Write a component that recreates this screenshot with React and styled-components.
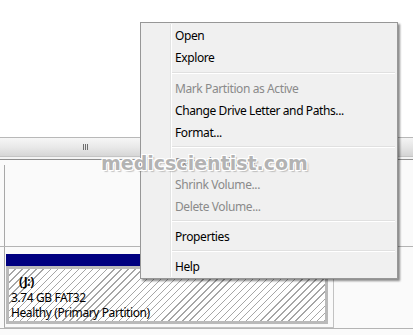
import React from 'react'
import styled, { createGlobalStyle } from 'styled-components'

const GlobalStyle = createGlobalStyle`
  html, body {
    margin: 0;
    padding: 0;
    background: #fff;
    overflow: hidden;
  }
  body {
    font-family: "Noto Sans", "Open Sans", sans-serif;
  }
`

const Screen = styled.div`
  position: relative;
  width: 413px;
  height: 335px;
  overflow: hidden;
  background: #fff;
  font-size: 12px;
  letter-spacing: -0.4px;
`

const TopPane = styled.div`
  height: 137px;
  background: #fff;
`

const ScrollBar = styled.div`
  height: 20px;
  box-sizing: border-box;
  border-top: 1px solid #b8b8b8;
  border-bottom: 1px solid #c4c4c4;
  background: linear-gradient(#f4f4f4, #e6e6e6 50%, #d4d4d4);
  display: flex;
`

const Thumb = styled.div`
  width: 170px;
  display: flex;
  align-items: center;
  justify-content: center;
  border-right: 1px solid #b0b0b0;
  background: linear-gradient(#f6f6f6, #e9e9e9 50%, #d6d6d6);
`

const Grip = styled.div`
  display: flex;
  gap: 1px;
  span {
    width: 1px;
    height: 6px;
    background: #6f6f6f;
  }
`

const Split = styled.div`
  height: 2px;
  background: #f4f4f4;
  border-bottom: 1px solid #8e8e8e;
`

const Lower = styled.div`
  background: #fafafa;
  height: 175px;
  padding-top: 5px;
  box-sizing: border-box;
`

const DiskRow = styled.div`
  height: 81px;
  margin-left: 4px;
  border-left: 1px solid #a8a8a8;
`

const RowLine = styled.div`
  height: 1px;
  background: #b4b4b4;
`

const PartFrame = styled.div`
  margin-left: 4px;
  width: 330px;
  height: 81px;
  box-sizing: border-box;
  border-left: 1px solid #a8a8a8;
  border-right: 1px solid #c2c2c2;
  border-bottom: 1px solid #c2c2c2;
  padding: 7px 0 0 1px;
`

const BlueBar = styled.div`
  width: 322px;
  height: 12px;
  background: #000080;
`

const Hatch = styled.div`
  width: 322px;
  height: 58px;
  box-sizing: border-box;
  border: 3px solid #bababa;
  padding: 5px 0 0 2px;
  background: repeating-linear-gradient(
    135deg,
    #fff 0px,
    #fff 4px,
    #a6a6a6 4px,
    #a6a6a6 5px
  );
  color: #000;
  line-height: 15.5px;
`

const PartLine = styled.div`
  white-space: nowrap;
  font-weight: ${p => (p.$bold ? 700 : 400)};
  padding-left: ${p => (p.$indent ? 8 : 0)}px;
`

const Menu = styled.div`
  position: absolute;
  left: 140px;
  top: 22px;
  width: 258px;
  box-sizing: border-box;
  border: 1px solid #979797;
  background: #f0f0f0;
  box-shadow: 2px 2px 2px rgba(0, 0, 0, 0.45);
  padding: 1px 0 1px;
  &::before {
    content: '';
    position: absolute;
    top: 1px;
    bottom: 1px;
    left: 29px;
    width: 2px;
    background: linear-gradient(90deg, #e2e3e3 50%, #fff 50%);
  }
`

const Item = styled.div`
  height: 22px;
  line-height: 23px;
  padding-left: 34px;
  color: ${p => (p.$disabled ? '#8a8a8a' : '#000')};
  white-space: nowrap;
`

const Sep = styled.div`
  height: ${p => p.$h || 8}px;
  display: flex;
  align-items: center;
  padding-left: 31px;
  padding-right: 2px;
  &::after {
    content: '';
    flex: 1;
    height: 2px;
    background: linear-gradient(#e0e0e0 50%, #fff 50%);
  }
`

const Watermark = styled.div`
  position: absolute;
  left: 101px;
  top: 152px;
  font-family: "DejaVu Sans", sans-serif;
  font-weight: 700;
  font-size: 19px;
  letter-spacing: 0;
  color: rgba(165, 165, 165, 0.85);
  text-shadow: -1px -1px 0 #fff, 1px -1px 0 #fff, -1px 1px 0 #fff, 1px 1px 0 #fff,
    2px 2px 1px rgba(120, 120, 120, 0.4);
  pointer-events: none;
  white-space: nowrap;
`

const menu = [
  { label: 'Open' },
  { label: 'Explore' },
  { sep: 9 },
  { label: 'Mark Partition as Active', disabled: true },
  { label: 'Change Drive Letter and Paths...' },
  { label: 'Format...' },
  { sep: 8 },
  { label: 'Extend Volume...', disabled: true },
  { label: 'Shrink Volume...', disabled: true },
  { label: 'Delete Volume...', disabled: true },
  { sep: 8 },
  { label: 'Properties' },
  { sep: 8 },
  { label: 'Help' },
]

export default function App() {
  return (
    <Screen>
      <GlobalStyle />
      <TopPane />
      <ScrollBar>
        <Thumb>
          <Grip><span /><span /><span /></Grip>
        </Thumb>
      </ScrollBar>
      <Split />
      <Lower>
        <DiskRow />
        <RowLine />
        <PartFrame>
          <BlueBar />
          <Hatch>
            <PartLine $bold $indent>(J:)</PartLine>
            <PartLine>3.74 GB FAT32</PartLine>
            <PartLine>Healthy (Primary Partition)</PartLine>
          </Hatch>
        </PartFrame>
        <RowLine />
      </Lower>

      <Menu>
        {menu.map((m, i) =>
          m.sep ? (
            <Sep key={i} $h={m.sep} />
          ) : (
            <Item key={i} $disabled={m.disabled}>{m.label}</Item>
          )
        )}
      </Menu>
      <Watermark>medicscientist.com</Watermark>
    </Screen>
  )
}
